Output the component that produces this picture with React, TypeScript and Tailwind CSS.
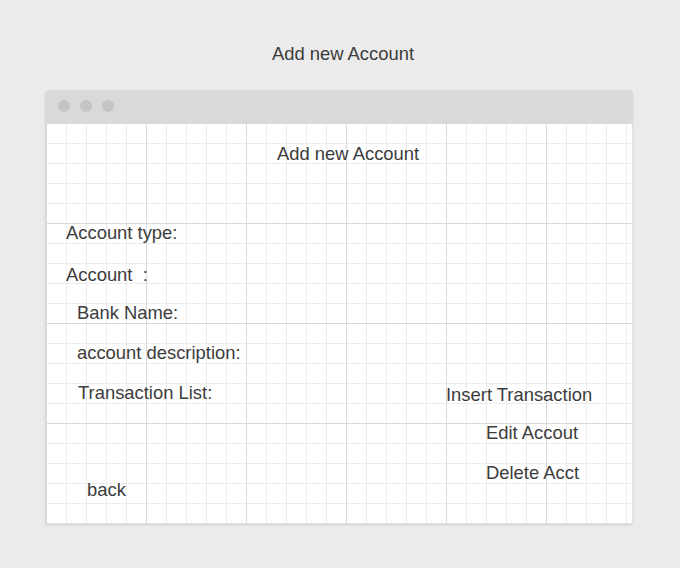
import React from "react";

export default function App() {
  return (
    <div className="w-[680px] h-[568px] bg-[#ebebeb] font-['Liberation_Sans',Arial,sans-serif] text-[#3c3c3c] text-[18.4px] leading-[20px] overflow-hidden">
      <div className="pt-[44px] pl-[6px] text-center h-[90px]">Add new Account</div>
      <div className="ml-[45px] w-[588px] h-[434px] flex flex-col rounded-t-[4px] overflow-hidden shadow-[0_1px_2px_rgba(0,0,0,0.12)] border-l border-[#dcdcdc]">
        <div className="h-[33px] bg-[#d9d9d9] flex items-center gap-[10px] pl-[12px] pb-[1px]">
          <div className="w-[12px] h-[12px] rounded-full bg-[#c4c4c4]" />
          <div className="w-[12px] h-[12px] rounded-full bg-[#c4c4c4]" />
          <div className="w-[12px] h-[12px] rounded-full bg-[#c4c4c4]" />
        </div>
        <div className="flex-1 flex flex-col pt-[21px] bg-white bg-[linear-gradient(to_right,#dadada_1px,transparent_1px),linear-gradient(to_bottom,#dadada_1px,transparent_1px),linear-gradient(to_right,#ececec_1px,transparent_1px),linear-gradient(to_bottom,#ececec_1px,transparent_1px)] bg-[size:100px_100px,100px_100px,20px_20px,20px_20px] border-r border-b border-[#e2e2e2]">
          <div className="pl-[231px]">Add new Account</div>
          <div className="flex mt-[59px]">
            <div className="flex flex-col w-[400px]">
              <div className="pl-[20px]">Account type:</div>
              <div className="pl-[20px] mt-[22px] whitespace-pre">Account  :</div>
              <div className="pl-[31px] mt-[18px]">Bank Name:</div>
              <div className="pl-[31px] mt-[20px]">account description:</div>
              <div className="pl-[32px] mt-[20px]">Transaction List:</div>
              <div className="pl-[41px] mt-[77px]">back</div>
            </div>
            <div className="flex flex-col pt-[162px] gap-[18px]">
              <div>Insert Transaction</div>
              <div className="pl-[40px]">Edit Accout</div>
              <div className="pl-[40px] mt-[2px]">Delete Acct</div>
            </div>
          </div>
        </div>
      </div>
    </div>
  );
}
